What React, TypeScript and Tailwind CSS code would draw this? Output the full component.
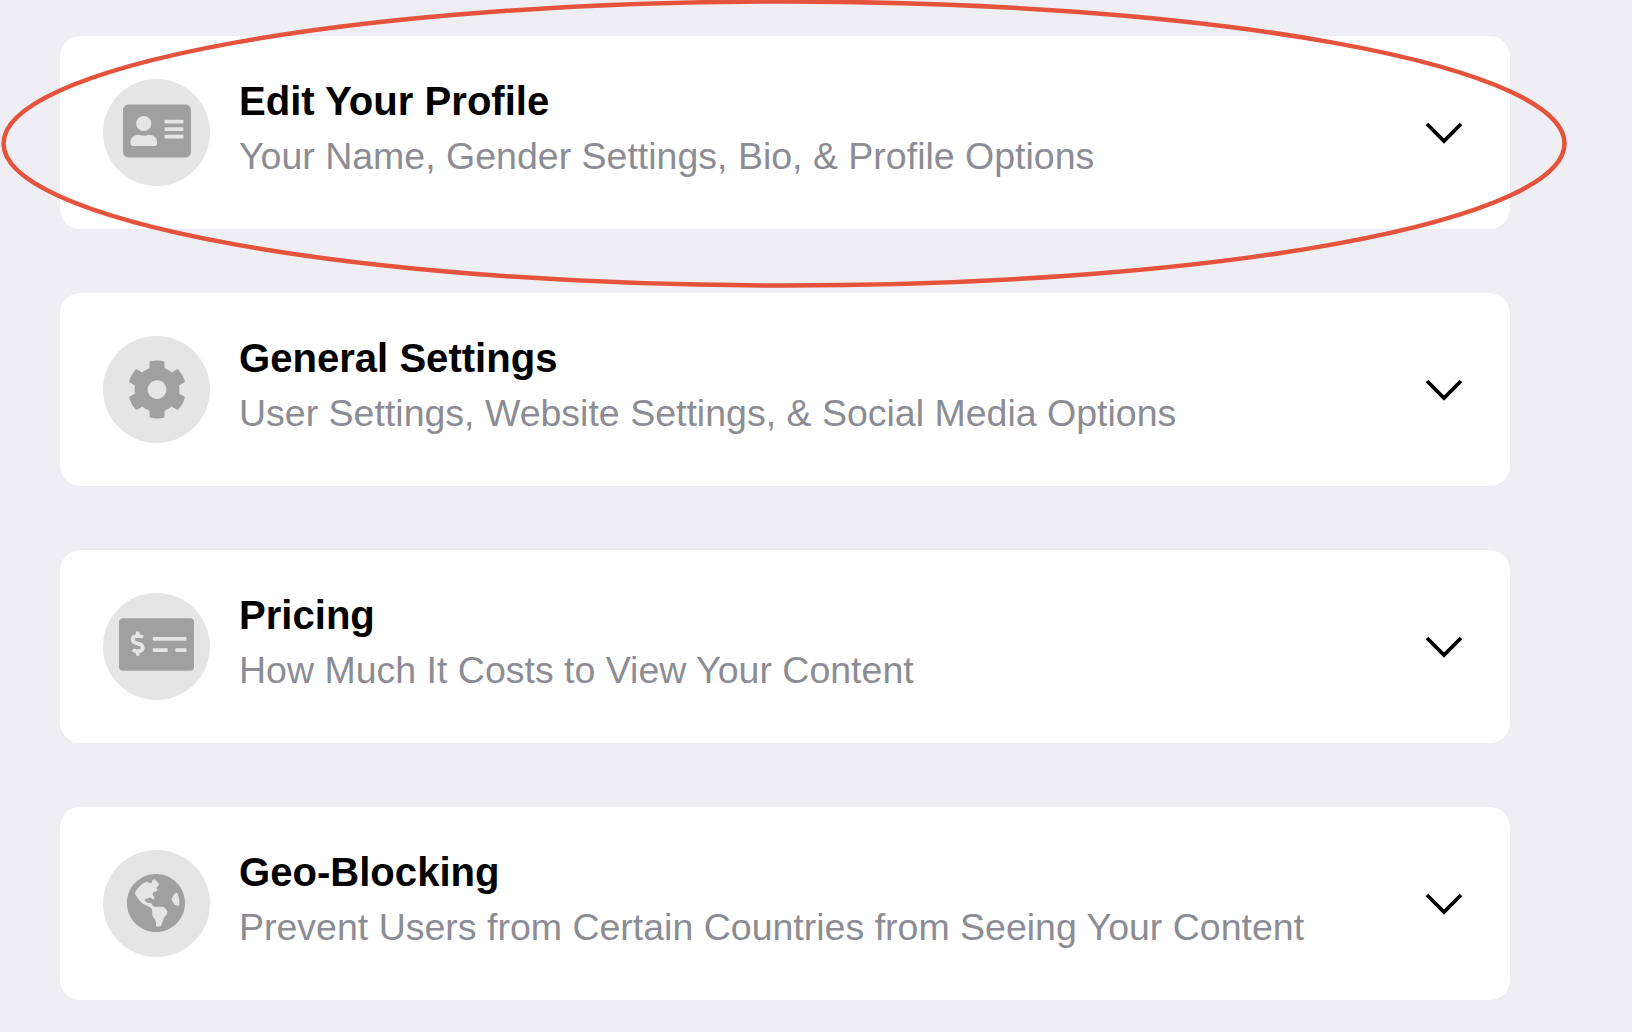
import type { ReactNode } from 'react'
import { FaAddressCard, FaCog, FaGlobeAmericas, FaMoneyCheckAlt } from 'react-icons/fa'

type Section = {
  title: string
  subtitle: string
  icon: ReactNode
}

const sections: Section[] = [
  {
    title: 'Edit Your Profile',
    subtitle: 'Your Name, Gender Settings, Bio, & Profile Options',
    icon: <FaAddressCard className="-mt-[3px] h-[66px] w-[68px]" />,
  },
  {
    title: 'General Settings',
    subtitle: 'User Settings, Website Settings, & Social Media Options',
    icon: <FaCog className="-mt-[1px] h-[61px] w-[60px]" />,
  },
  {
    title: 'Pricing',
    subtitle: 'How Much It Costs to View Your Content',
    icon: <FaMoneyCheckAlt className="-mt-[4px] h-[75px] w-[75px]" />,
  },
  {
    title: 'Geo-Blocking',
    subtitle: 'Prevent Users from Certain Countries from Seeing Your Content',
    icon: <FaGlobeAmericas className="-mt-[1px] -ml-[1px] h-[60px] w-[60px]" />,
  },
]

function Chevron() {
  return (
    <svg viewBox="0 0 38 22" className="h-[22px] w-[38px] shrink-0" fill="none" stroke="#000000" strokeWidth="3.8">
      <path d="M2 2 L19 19 L36 2" />
    </svg>
  )
}

function SectionCard({ section }: { section: Section }) {
  return (
    <div className="flex h-[193px] items-center rounded-[20px] bg-white pl-[43px] pr-[47px] shadow-[0_0_2px_rgba(0,0,0,0.04)]">
      <div className="flex h-[107px] w-[107px] shrink-0 items-center justify-center rounded-full bg-[#e5e5e5] text-[#a0a0a0]">
        {section.icon}
      </div>
      <div className="ml-[29px] flex-1 pb-[9px]">
        <div className="text-[40.1px] font-bold leading-[56px] text-black">{section.title}</div>
        <div className="text-[37.5px] leading-[55px] text-[#8c8c94]">{section.subtitle}</div>
      </div>
      <Chevron />
    </div>
  )
}

export default function App() {
  return (
    <div className="relative h-[1032px] w-[1632px] overflow-hidden bg-[#eeeef3] font-['Liberation_Sans',Arial,sans-serif]">
      <div className="ml-[60px] flex w-[1450px] flex-col gap-[64px] pt-[36px]">
        {sections.map((section) => (
          <SectionCard key={section.title} section={section} />
        ))}
      </div>
      {/* hand-drawn highlight around the first row */}
      <svg className="pointer-events-none absolute left-0 top-0 h-[300px] w-[1632px]" viewBox="0 0 1632 300" fill="none">
        <ellipse cx="784" cy="143.5" rx="780.5" ry="142" stroke="#e5533d" strokeWidth="4.5" />
      </svg>
    </div>
  )
}
